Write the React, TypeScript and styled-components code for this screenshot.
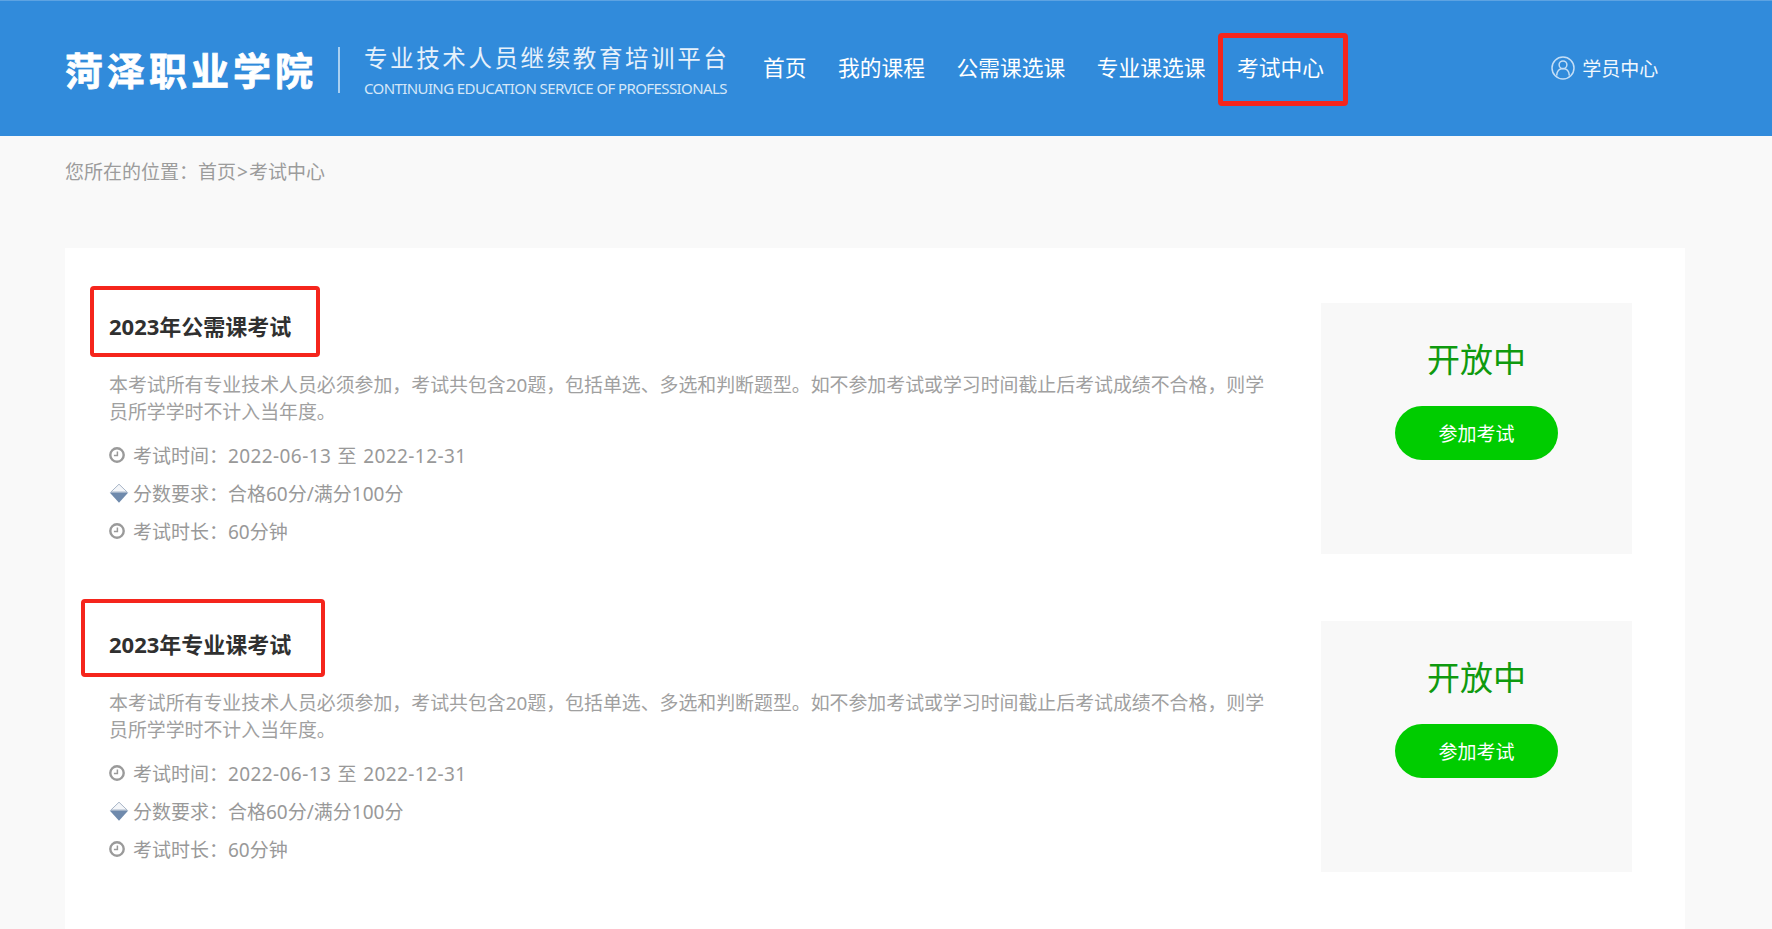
import styled, { createGlobalStyle } from 'styled-components'

const navItems = ['首页', '我的课程', '公需课选课', '专业课选课', '考试中心']

const exams = [
  { title: '2023年公需课考试', wideMark: false },
  { title: '2023年专业课考试', wideMark: true },
]

const description =
  '本考试所有专业技术人员必须参加，考试共包含20题，包括单选、多选和判断题型。如不参加考试或学习时间截止后考试成绩不合格，则学员所学学时不计入当年度。'

const GlobalStyle = createGlobalStyle`
  *,
  *::before,
  *::after {
    box-sizing: border-box;
  }

  html,
  body {
    margin: 0;
    overflow: hidden;
  }

  body {
    font-family: 'Noto Sans', 'Noto Sans CJK SC', sans-serif;
    background: #f9f9f9;
    color: #999999;
  }
`

function ClockIcon() {
  return (
    <IconSlot>
      <svg width="16" height="16" viewBox="0 0 16 16" fill="none">
        <circle cx="8" cy="8" r="6.7" stroke="#9a9a9a" strokeWidth="2.4" />
        <path d="M8.4 4.4V8.6H4.9" stroke="#9a9a9a" strokeWidth="1.5" />
      </svg>
    </IconSlot>
  )
}

function ScoreIcon() {
  return (
    <IconSlot>
      <svg width="20" height="20" viewBox="0 0 19 20" fill="none">
        <path d="M9.5 1.2 17.6 9H1.4Z" fill="#f4f6f9" stroke="#a9b6c8" strokeWidth="1" />
        <path d="M0.2 9.6H18.8L9.5 19.8Z" fill="#6f8aac" />
      </svg>
    </IconSlot>
  )
}

function UserIcon() {
  return (
    <svg width="24" height="24" viewBox="0 0 24 24" fill="none" stroke="#c4def6" strokeWidth="1.5">
      <circle cx="12" cy="12" r="11" />
      <circle cx="12" cy="8.8" r="3.9" />
      <path d="M5.6 19.6c.4-4.4 2.8-7 6.4-7s6 2.6 6.4 7" />
    </svg>
  )
}

function ExamRow({ title, wideMark }: { title: string; wideMark: boolean }) {
  return (
    <Row>
      <Info>
        <Title $wide={wideMark}>{title}</Title>
        <Description>{description}</Description>
        <MetaList>
          <MetaRow>
            <ClockIcon />
            考试时间：<DateRange>2022-06-13 至 2022-12-31</DateRange>
          </MetaRow>
          <MetaRow>
            <ScoreIcon />
            分数要求：合格60分/满分100分
          </MetaRow>
          <MetaRow>
            <ClockIcon />
            考试时长：60分钟
          </MetaRow>
        </MetaList>
      </Info>
      <StatusPanel>
        <StatusText>开放中</StatusText>
        <JoinButton type="button">参加考试</JoinButton>
      </StatusPanel>
    </Row>
  )
}

export default function App() {
  return (
    <Page>
      <GlobalStyle />
      <Header>
        <Logo>
          <SchoolName>菏泽职业学院</SchoolName>
          <LogoDivider />
          <Slogan>
            <SloganCn>专业技术人员继续教育培训平台</SloganCn>
            <SloganEn>CONTINUING EDUCATION SERVICE OF PROFESSIONALS</SloganEn>
          </Slogan>
        </Logo>
        <Nav>
          {navItems.map((item) => (
            <NavItem key={item} $marked={item === '考试中心'}>
              {item}
            </NavItem>
          ))}
        </Nav>
        <UserCenter>
          <UserIcon />
          学员中心
        </UserCenter>
      </Header>
      <Main>
        <Crumb>
          您所在的位置：首页<CrumbSeparator>&gt;</CrumbSeparator>考试中心
        </Crumb>
        <Card>
          {exams.map((exam) => (
            <ExamRow key={exam.title} title={exam.title} wideMark={exam.wideMark} />
          ))}
        </Card>
      </Main>
    </Page>
  )
}

const Page = styled.div`
  min-height: 100vh;
  display: flex;
  flex-direction: column;
`

const Header = styled.header`
  height: 136px;
  display: flex;
  align-items: center;
  padding: 0 0 1px 65px;
  background: #318bdb;
  border-top: 1px solid #5da3e2;
`

const Logo = styled.div`
  width: 682.25px;
  margin-top: 4px;
  display: flex;
  align-items: center;
  color: #ffffff;
`

const SchoolName = styled.div`
  width: 273px;
  font-size: 38px;
  line-height: 44px;
  font-weight: 700;
  letter-spacing: 4px;
  white-space: nowrap;
  -webkit-text-stroke: 0.8px #ffffff;
`

const LogoDivider = styled.div`
  width: 2px;
  height: 46px;
  background: #a9d0f1;
`

const Slogan = styled.div`
  margin-left: 24px;
  display: flex;
  flex-direction: column;
  gap: 5px;
`

const SloganCn = styled.div`
  font-size: 23.5px;
  line-height: 30px;
  letter-spacing: 2.6px;
  white-space: nowrap;
  color: #e6f1fb;
`

const SloganEn = styled.div`
  font-size: 15px;
  line-height: 20px;
  letter-spacing: -0.6px;
  white-space: nowrap;
  color: #d5e7f8;
`

const Nav = styled.nav`
  display: flex;
  align-items: center;
`

const NavItem = styled.a<{ $marked: boolean }>`
  position: relative;
  padding: 0 15.75px;
  font-size: 21.75px;
  line-height: 40px;
  color: #ffffff;
  white-space: nowrap;

  &::after {
    content: '';
    display: ${({ $marked }) => ($marked ? 'block' : 'none')};
    position: absolute;
    inset: -15px -7.75px -18px -3.75px;
    border: 5px solid #f5251c;
    border-radius: 4px;
  }
`

const UserCenter = styled.div`
  margin-left: 211.5px;
  display: flex;
  align-items: center;
  gap: 7px;
  font-size: 19px;
  color: #f2f8fd;
  white-space: nowrap;
`

const Main = styled.main`
  flex: 1;
  display: flex;
  flex-direction: column;
  padding: 0 87px 0 65px;
`

const Crumb = styled.div`
  font-size: 19px;
  line-height: 72px;
  margin-bottom: 40px;
  color: #9c9c9c;
`

const CrumbSeparator = styled.span`
  margin: 0 1px;
`

const Card = styled.section`
  flex: 1;
  display: flex;
  flex-direction: column;
  gap: 66.6px;
  padding: 55px 53px 58px 44px;
  background: #ffffff;
`

const Row = styled.article`
  display: flex;
  justify-content: space-between;
`

const Info = styled.div`
  width: 1170px;
  padding-top: 8px;
`

const Title = styled.h2<{ $wide: boolean }>`
  position: relative;
  width: 182px;
  margin: 0;
  font-size: 22px;
  line-height: 30px;
  font-weight: 700;
  color: #303030;
  white-space: nowrap;

  &::after {
    content: '';
    position: absolute;
    top: ${({ $wide }) => ($wide ? '-30px' : '-25px')};
    bottom: ${({ $wide }) => ($wide ? '-18px' : '-16px')};
    left: ${({ $wide }) => ($wide ? '-28px' : '-19px')};
    right: ${({ $wide }) => ($wide ? '-34px' : '-29px')};
    border: 4px solid #f5251c;
    border-radius: 4px;
  }
`

const Description = styled.p`
  margin: 31px 0 0;
  font-size: 18.9px;
  line-height: 27px;
  color: #a0a0a0;
`

const MetaList = styled.div`
  margin-top: 10px;
  display: flex;
  flex-direction: column;
`

const MetaRow = styled.div`
  display: flex;
  align-items: center;
  height: 38px;
  font-size: 19px;
  color: #999999;
  white-space: pre;
`

const DateRange = styled.span`
  letter-spacing: 0.4px;
  word-spacing: 1px;
`

const IconSlot = styled.span`
  width: 24px;
  display: inline-flex;
  align-items: center;
`

const StatusPanel = styled.aside`
  width: 311px;
  height: 251px;
  display: flex;
  flex-direction: column;
  align-items: center;
  padding-top: 35px;
  background: #f8f8f8;
`

const StatusText = styled.div`
  font-size: 33px;
  line-height: 44px;
  color: #0f9a0f;
`

const JoinButton = styled.button`
  width: 163px;
  height: 54px;
  margin-top: 24px;
  border: none;
  border-radius: 27px;
  background: #00cc00;
  color: #ffffff;
  font-family: inherit;
  font-size: 19px;
`
